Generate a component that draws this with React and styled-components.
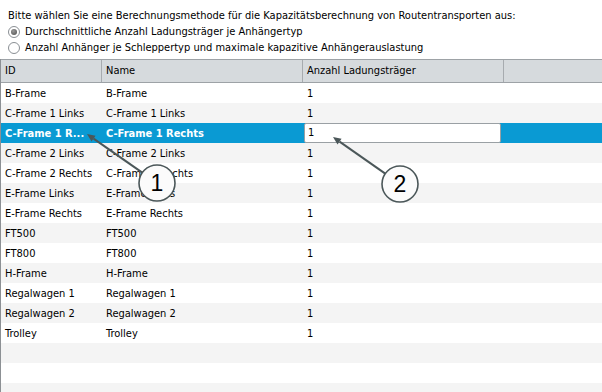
import React from 'react';
import styled, { createGlobalStyle } from 'styled-components';

const GlobalStyle = createGlobalStyle`
  html, body {
    margin: 0;
    padding: 0;
    background: #ffffff;
  }
  body {
    font-family: 'DejaVu Sans Condensed', 'DejaVu Sans', sans-serif;
    font-size: 11px;
    color: #000;
  }
`;

const Page = styled.div`
  position: relative;
  width: 602px;
  height: 392px;
  overflow: hidden;
  background: #fff;
`;

const Options = styled.div`
  display: flex;
  flex-direction: column;
  padding: 8px 0 0 8px;
  height: 51px;
`;

const Line = styled.div`
  height: 16px;
  line-height: 14px;
  display: flex;
  align-items: center;
  gap: 5px;
  white-space: nowrap;
`;

const Radio = styled.span`
  box-sizing: border-box;
  width: 12px;
  height: 12px;
  border-radius: 50%;
  border: 1px solid #8a8f94;
  background: #fff;
  display: flex;
  align-items: center;
  justify-content: center;

  &::after {
    content: '';
    width: 6px;
    height: 6px;
    border-radius: 50%;
    background: ${p => (p.checked ? 'radial-gradient(circle at 40% 35%, #9a9a9a, #4a4a4a)' : 'transparent')};
  }
`;

const Table = styled.div`
  border-left: 1px solid #8c9094;
  height: 333px;
  background: repeating-linear-gradient(
    to bottom,
    #ffffff 0px,
    #ffffff 20px,
    #f4f4f4 20px,
    #f4f4f4 40px
  );
  background-position: 0 24px;
`;

const Header = styled.div`
  display: flex;
  height: 22px;
  background: #d6dadd;
  border-top: 1px solid #9da2a6;
  border-bottom: 1px solid #9da2a6;
`;

const HeadCell = styled.div`
  box-sizing: border-box;
  width: ${p => p.w}px;
  flex: ${p => (p.w ? 'none' : '1')};
  padding-left: 4px;
  line-height: 22px;
  border-right: ${p => (p.last ? 'none' : '1px solid #a7abaf')};
  white-space: nowrap;
`;

const Row = styled.div`
  display: flex;
  height: 20px;
  align-items: center;
  background: ${p => (p.selected ? '#0a9ad3' : 'transparent')};
  color: ${p => (p.selected ? '#fff' : '#000')};
  font-weight: ${p => (p.selected ? 'bold' : 'normal')};
`;

const Cell = styled.div`
  box-sizing: border-box;
  width: ${p => p.w}px;
  flex: none;
  padding-left: 4px;
  white-space: nowrap;
  overflow: hidden;
`;

const EditBox = styled.div`
  box-sizing: border-box;
  width: 197px;
  height: 20px;
  margin-left: 1px;
  padding-left: 3px;
  line-height: 18px;
  background: #fff;
  color: #000;
  font-weight: normal;
  border: 1px solid #9aa0a4;
  border-radius: 2px;
`;

const Overlay = styled.svg`
  position: absolute;
  left: 0;
  top: 0;
  pointer-events: none;
`;

const rows = [
  ['B-Frame', 'B-Frame'],
  ['C-Frame 1 Links', 'C-Frame 1 Links'],
  ['C-Frame 1 Rechts', 'C-Frame 1 Rechts'],
  ['C-Frame 2 Links', 'C-Frame 2 Links'],
  ['C-Frame 2 Rechts', 'C-Frame 2 Rechts'],
  ['E-Frame Links', 'E-Frame Links'],
  ['E-Frame Rechts', 'E-Frame Rechts'],
  ['FT500', 'FT500'],
  ['FT800', 'FT800'],
  ['H-Frame', 'H-Frame'],
  ['Regalwagen 1', 'Regalwagen 1'],
  ['Regalwagen 2', 'Regalwagen 2'],
  ['Trolley', 'Trolley'],
];

const Callout = ({ cx, cy, tx, ty, label }) => {
  const dx = tx - cx;
  const dy = ty - cy;
  const len = Math.sqrt(dx * dx + dy * dy);
  const ux = dx / len;
  const uy = dy / len;
  const sx = cx + ux * 18;
  const sy = cy + uy * 18;
  const bx = tx - ux * 8;
  const by = ty - uy * 8;
  const px = -uy * 3.5;
  const py = ux * 3.5;
  return (
    <g>
      <line x1={sx} y1={sy} x2={bx} y2={by} stroke="#4b5759" strokeWidth="2" />
      <polygon points={`${tx},${ty} ${bx + px},${by + py} ${bx - px},${by - py}`} fill="#4b5759" />
      <circle cx={cx} cy={cy} r="18" fill="#fbfbfb" stroke="#4b5759" strokeWidth="1.6" />
      <text
        x={cx}
        y={cy + 8}
        textAnchor="middle"
        fontFamily="'Liberation Sans', Arial, sans-serif"
        fontSize="23"
        fill="#000"
      >
        {label}
      </text>
    </g>
  );
};

export default function App() {
  return (
    <Page>
      <GlobalStyle />
      <Options>
        <Line>Bitte wählen Sie eine Berechnungsmethode für die Kapazitätsberechnung von Routentransporten aus:</Line>
        <Line><Radio checked />Durchschnittliche Anzahl Ladungsträger je Anhängertyp</Line>
        <Line><Radio />Anzahl Anhänger je Schleppertyp und maximale kapazitive Anhängerauslastung</Line>
      </Options>
      <Table>
        <Header>
          <HeadCell w={101}>ID</HeadCell>
          <HeadCell w={201}>Name</HeadCell>
          <HeadCell w={201}>Anzahl Ladungsträger</HeadCell>
          <HeadCell last />
        </Header>
        {rows.map(([id, name], i) => {
          const selected = i === 2;
          return (
            <Row key={id} selected={selected}>
              <Cell w={101}>{selected ? 'C-Frame 1 R...' : id}</Cell>
              <Cell w={201}>{name}</Cell>
              {selected ? <EditBox>1</EditBox> : <Cell w={201}>1</Cell>}
            </Row>
          );
        })}
      </Table>
      <Overlay width="602" height="392">
        <Callout cx={157} cy={183} tx={87} ty={134} label="1" />
        <Callout cx={400} cy={184} tx={333} ty={137} label="2" />
      </Overlay>
    </Page>
  );
}
